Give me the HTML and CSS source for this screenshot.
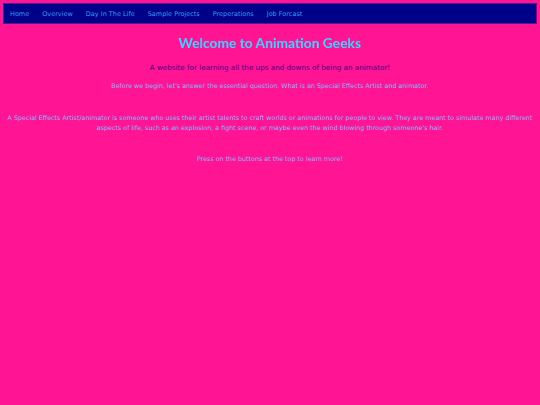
FILE: index.html
```html
<!DOCTYPE html>
<html>
<head>
<meta charset="utf-8">
<link rel="stylesheet" href="styles.css">
</head>
<body>
<nav class="nav">
  <a class="nav-link">Home</a>
  <a class="nav-link">Overview</a>
  <a class="nav-link">Day In The Life</a>
  <a class="nav-link">Sample Projects</a>
  <a class="nav-link">Preperations</a>
  <a class="nav-link">Job Forcast</a>
</nav>
<main class="content">
  <h1 class="title">Welcome to Animation Geeks</h1>
  <p class="subtitle">A website for learning all the ups and downs of being an animator!</p>
  <p class="text intro">Before we begin, let's answer the essential question. What is an Special Effects Artist and animator.</p>
  <p class="text desc">A Special Effects Artist/animator is someone who uses their artist talents to craft worlds or animations for people to view. They are meant to simulate many different aspects of life, such as an explosion, a fight scene, or maybe even the wind blowing through someone's hair.</p>
  <p class="text press">Press on the buttons at the top to learn more!</p>
</main>
</body>
</html>
```

FILE: styles.css
```css
html, body {
  margin: 0;
  padding: 0;
}
body {
  background: #ff1493;
  padding: 3px;
  font-family: "DejaVu Sans", sans-serif;
  color: #40c8ff;
  height: 405px;
  box-sizing: border-box;
}
.nav {
  display: flex;
  align-items: center;
  gap: 13px;
  height: 21px;
  box-sizing: border-box;
  background: #000088;
  border: 1px solid #5a148f;
  padding: 0 6px;
}
.nav-link {
  font-size: 6.5px;
  color: #3a9cf0;
}
.content {
  text-align: center;
}
.title {
  font-family: Lato, "DejaVu Sans", sans-serif;
  font-size: 13.8px;
  font-weight: bold;
  margin: 10px 0 0;
  line-height: 18px;
}
.subtitle {
  font-size: 7.2px;
  color: #4b0082;
  margin: 11px 0 0;
  line-height: 10px;
}
.text {
  font-size: 6.35px;
  line-height: 10px;
  margin: 0;
  color: #7fb8ff;
}
.intro {
  margin-top: 8px;
}
.desc {
  margin-top: 22px;
  padding: 0 2px;
}
.press {
  margin-top: 21px;
}
```
